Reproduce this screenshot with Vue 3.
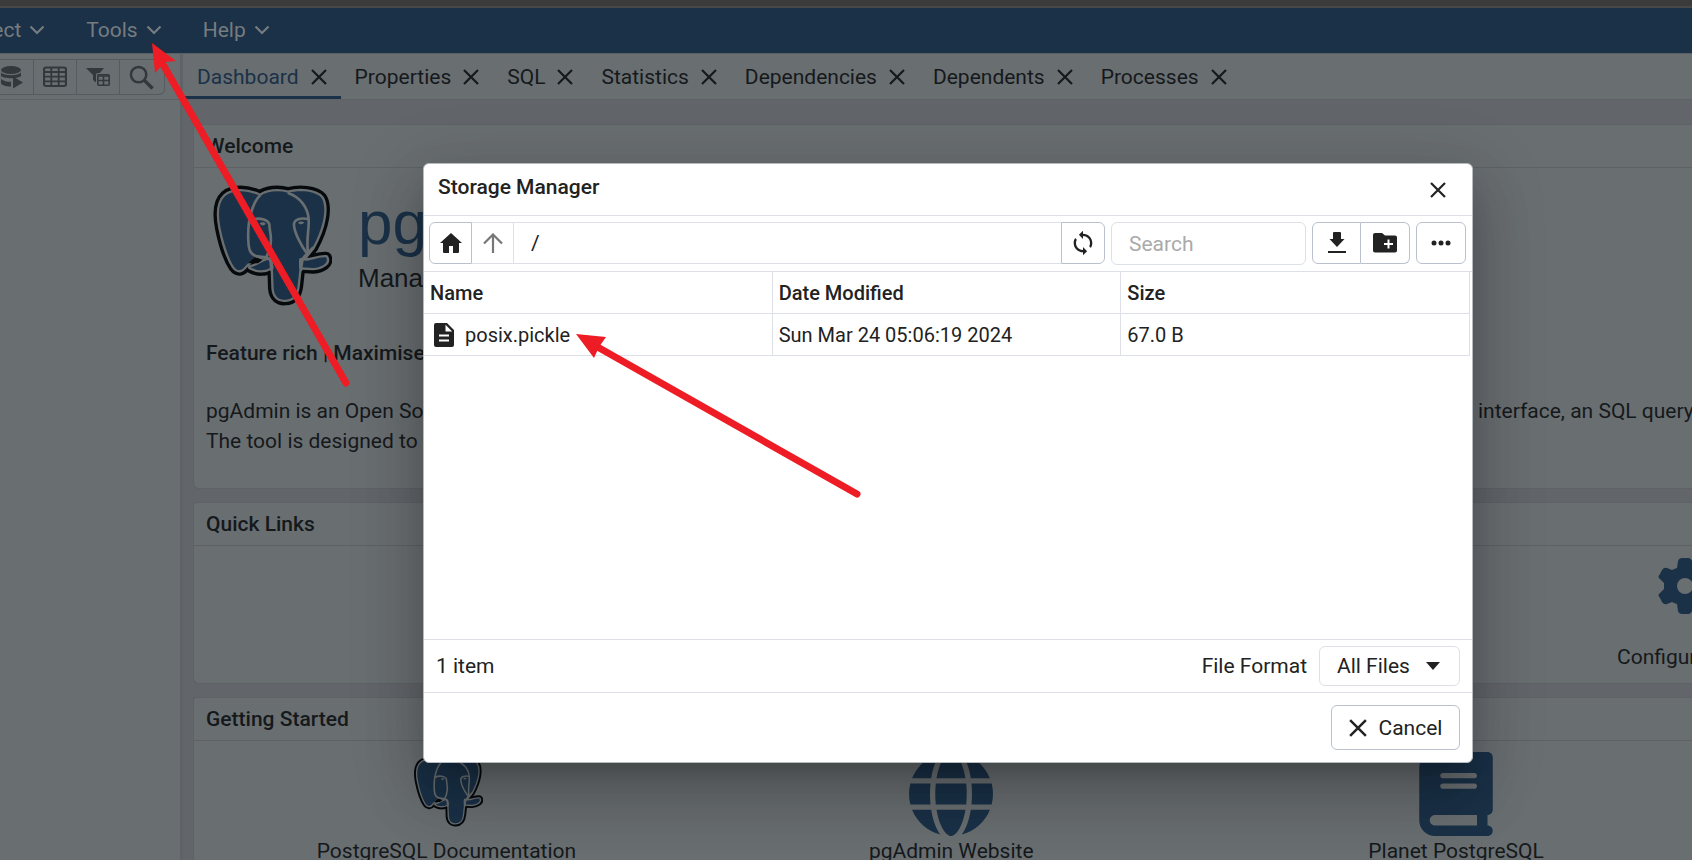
<script setup>
import { ref } from 'vue'

const menus = ['Object', 'Tools', 'Help']
const tabs = ['Dashboard', 'Properties', 'SQL', 'Statistics', 'Dependencies', 'Dependents', 'Processes']
const columns = ['Name', 'Date Modified', 'Size']
const files = [{ name: 'posix.pickle', modified: 'Sun Mar 24 05:06:19 2024', size: '67.0 B' }]
const path = ref('/')
const search = ref('')
const format = ref('All Files')
</script>

<template>
  <div class="app">
    <svg class="defs" aria-hidden="true">
      <symbol id="elephant" viewBox="98 72 360 372">
        <g stroke-linejoin="round" stroke-linecap="round">
          <g class="el-black">
            <path d="M242 108 C200 88 158 90 138 108 C116 128 116 165 124 205 C133 250 147 294 164 320 C176 336 188 332 198 318 L226 290 L280 300 L283 385 C285 411 300 421 318 419 C344 418 352 402 355 375 L362 310 L400 262 C434 200 444 140 426 113 C408 92 360 90 326 98 C296 90 262 93 242 108Z" />
            <path d="M213 322 C240 316 246 302 270 300 L276 322 C258 333 234 334 213 322Z M366 300 C392 308 412 290 440 292 C450 308 428 322 402 324 L366 322Z" />
          </g>
          <g class="el-line">
            <path d="M242 108 C200 88 158 90 138 108 C116 128 116 165 124 205 C133 250 147 294 164 320 C176 336 188 332 198 318 L226 290 L280 300 L283 385 C285 411 300 421 318 419 C344 418 352 402 355 375 L362 310 L400 262 C434 200 444 140 426 113 C408 92 360 90 326 98 C296 90 262 93 242 108Z" />
            <path d="M213 322 C240 316 246 302 270 300 L276 322 C258 333 234 334 213 322Z M366 300 C392 308 412 290 440 292 C450 308 428 322 402 324 L366 322Z" />
          </g>
          <path class="el-ink" d="M206 310 L226 291 L250 299 L236 310Z" />
          <g class="el-detail">
            <path d="M242 106 C224 124 216 150 210 180 C206 205 206 235 208 256 C210 276 220 288 238 290" />
            <path d="M212 182 C230 172 262 174 270 192 C270 216 280 232 272 262 C270 276 264 286 258 296" />
            <path d="M328 100 C362 112 386 142 388 178 C390 205 380 240 386 278" />
            <path d="M388 178 C366 172 342 178 344 196 C346 220 366 258 384 282 L400 264" />
            <path d="M384 282 C366 292 368 310 365 330" />
            <path d="M238 290 C256 290 274 294 274 306 L276 330" />
          </g>
          <path class="el-eye" d="M241 190 C246 185 255 186 259 191 C255 198 246 198 241 190Z M356 188 C362 183 370 184 375 187 C371 194 362 195 356 188Z" />
        </g>
      </symbol>
      <symbol id="chevron" viewBox="0 0 16 10"><path d="M1.500 1.500 L8 8 L14.500 1.500" fill="none" stroke="currentColor" stroke-width="2.200" /></symbol>
      <symbol id="cross" viewBox="0 0 16 16"><path d="M1 1 L15 15 M15 1 L1 15" fill="none" stroke="currentColor" stroke-width="2.200" /></symbol>
    </svg>

    <div class="strip"></div>
    <nav class="menubar">
      <button v-for="m in menus" :key="m" type="button">{{ m }}<svg width="16" height="10"><use href="#chevron" /></svg></button>
    </nav>

    <div class="workspace">
      <aside class="browser">
        <div class="tools">
          <div class="tool-group">
            <button type="button" aria-label="Query tool">
              <svg width="24" height="24" viewBox="0 0 24 24">
                <ellipse cx="11" cy="5" rx="10" ry="4" />
                <path d="M1 7.500 C4 11 18 11 21 7.500 V11 C18 14 4 14 1 11Z M1 14 C4 16.500 8 17 11 16.800 V21.500 C6 21.500 1 20 1 18Z M13 11.500 L23 17.500 L13 23.500Z" />
              </svg>
            </button>
            <button type="button" aria-label="View data">
              <svg width="24" height="22" viewBox="0 0 24 22">
                <g fill="none" stroke="currentColor" stroke-width="1.800">
                  <rect x="1" y="1.500" width="22" height="18.500" rx="2" stroke-width="2.200" />
                  <path d="M1 6 H23 M1 10.700 H23 M1 15.300 H23 M8.300 2 V20 M15.700 2 V20" />
                </g>
              </svg>
            </button>
            <button type="button" aria-label="Filtered rows">
              <svg width="24" height="20" viewBox="0 0 24 20">
                <path d="M0 1 H18 L12 8 V17 L7 13 V8Z" />
                <rect x="10" y="6" width="14" height="14" rx="2" class="knock" />
                <g fill="none" stroke="currentColor" stroke-width="1.600">
                  <rect x="11.800" y="7.800" width="11.400" height="10.400" rx="1" />
                  <path d="M12 9 H23 M12 13.500 H23 M17.500 9 V18" />
                </g>
              </svg>
            </button>
            <button type="button" aria-label="Search objects">
              <svg width="25" height="25" viewBox="0 0 26 26">
                <g fill="none" stroke="currentColor">
                  <circle cx="10" cy="10" r="8" stroke-width="2.600" />
                  <path d="M16 16 L24.500 24.500" stroke-width="3.600" />
                </g>
              </svg>
            </button>
          </div>
        </div>
      </aside>

      <main class="content">
        <div class="tabs" role="tablist">
          <div v-for="(t, i) in tabs" :key="t" class="tab" :class="{ active: i === 0 }">
            <button type="button" role="tab">{{ t }}</button>
            <button type="button" class="tab-x" :aria-label="'Close ' + t"><svg width="16" height="16"><use href="#cross" /></svg></button>
          </div>
        </div>

        <div class="cards">
          <section class="card">
            <h2>Welcome</h2>
            <div class="welcome">
              <div class="brand">
                <svg width="120" height="124"><use href="#elephant" /></svg>
                <div class="brand-text">
                  <div class="brand-name">pgAdmin</div>
                  <div class="brand-sub">Management Tools for PostgreSQL</div>
                </div>
              </div>
              <h3>Feature rich | Maximises PostgreSQL | Open Source</h3>
              <div class="about">
                <span>pgAdmin is an Open Source administration and management tool for the PostgreSQL database.</span>
                <span>interface, an SQL query tool</span>
              </div>
              <div class="about"><span>The tool is designed to answer the needs of developers</span></div>
            </div>
          </section>

          <section class="card">
            <h2>Quick Links</h2>
            <div class="quick">
              <a href="#" class="config">
                <svg width="56" height="56" viewBox="-28 -28 56 56">
                  <path fill-rule="evenodd" d="M-7 -25 Q-6 -28 -3 -28 H3 Q6 -28 7 -25 L8 -18 Q11 -17 13 -15 L19 -18 Q22 -19 24 -16 L26 -12 Q28 -9 25 -7 L21 -4 V4 L25 7 Q28 9 26 12 L24 16 Q22 19 19 18 L13 15 Q11 17 8 18 L7 25 Q6 28 3 28 H-3 Q-6 28 -7 25 L-8 18 Q-11 17 -13 16 L-18 18 Q-21 19 -23 16 L-25 12 Q-28 9 -25 7 L-21 3 V-3 L-25 -7 Q-28 -9 -25 -12 L-23 -16 Q-21 -19 -18 -18 L-13 -16 Q-11 -17 -8 -18Z M0 -8 A8 8 0 1 0 0 8 A8 8 0 1 0 0 -8Z" />
                </svg>
                <span>Configure pgAdmin</span>
              </a>
            </div>
          </section>

          <section class="card">
            <h2>Getting Started</h2>
            <div class="started">
              <a href="#">
                <span class="pic docs"><svg width="70" height="72"><use href="#elephant" /></svg></span>
                <span>PostgreSQL Documentation</span>
              </a>
              <a href="#">
                <span class="pic"><svg width="84" height="84" viewBox="0 0 512 512"><path d="M352 256c0 22.200-1.200 43.600-3.300 64H163.300c-2.200-20.400-3.300-41.800-3.300-64s1.200-43.600 3.300-64H348.700c2.200 20.400 3.300 41.800 3.300 64zm28.800-64H503.900c5.300 20.500 8.100 41.900 8.100 64s-2.800 43.500-8.100 64H380.800c2.100-20.600 3.200-42 3.200-64s-1.100-43.400-3.200-64zm112.600-32H376.700c-10-63.900-29.800-117.400-55.300-151.600c78.300 20.700 142 77.500 171.900 151.600zm-149.100 0H167.700c6.100-36.400 15.500-68.600 27-94.700c10.500-23.600 22.200-40.700 33.500-51.500C239.400 3.200 248.700 0 256 0s16.600 3.200 27.800 13.800c11.300 10.800 23 27.900 33.500 51.500c11.600 26 20.900 58.200 27 94.700zm-209 0H18.600C48.600 85.900 112.200 29.100 190.600 8.400C165.100 42.600 145.300 96.100 135.300 160zM8.100 192H131.200c-2.100 20.600-3.200 42-3.200 64s1.100 43.400 3.200 64H8.100C2.800 299.500 0 278.100 0 256s2.800-43.500 8.100-64zM194.700 446.600c-11.600-26-20.900-58.200-27-94.600H344.300c-6.100 36.400-15.500 68.600-27 94.600c-10.500 23.600-22.200 40.700-33.500 51.500C272.600 508.800 263.300 512 256 512s-16.600-3.200-27.800-13.800c-11.300-10.800-23-27.900-33.500-51.500zM135.300 352c10 63.900 29.800 117.400 55.300 151.600C112.200 482.900 48.600 426.100 18.600 352H135.300zm358.100 0c-30 74.100-93.600 130.900-171.900 151.600c25.500-34.200 45.200-87.700 55.300-151.600H493.400z" /></svg></span>
                <span>pgAdmin Website</span>
              </a>
              <a href="#">
                <span class="pic"><svg width="74" height="84" viewBox="0 0 448 512"><path d="M96 0C43 0 0 43 0 96V416c0 53 43 96 96 96H384h32c17.700 0 32-14.300 32-32s-14.300-32-32-32V384c17.700 0 32-14.300 32-32V32c0-17.700-14.300-32-32-32H384 96zm0 384H352v64H96c-17.700 0-32-14.300-32-32s14.300-32 32-32zm32-240c0-8.800 7.200-16 16-16H336c8.800 0 16 7.200 16 16s-7.200 16-16 16H144c-8.800 0-16-7.200-16-16zm16 48H336c8.800 0 16 7.200 16 16s-7.200 16-16 16H144c-8.800 0-16-7.200-16-16s7.200-16 16-16z" /></svg></span>
                <span>Planet PostgreSQL</span>
              </a>
            </div>
          </section>
        </div>
      </main>
    </div>

    <div class="overlay">
      <div class="dialog" role="dialog" aria-labelledby="dialog-title">
        <header>
          <h1 id="dialog-title">Storage Manager</h1>
          <button type="button" aria-label="Close"><svg width="16" height="16"><use href="#cross" /></svg></button>
        </header>

        <div class="bar">
          <div class="path">
            <button type="button" class="home" aria-label="Home"><svg width="22" height="20" viewBox="0 0 22 20"><path d="M11 0 L22 10 H19 V19 Q19 20 18 20 H13 V13 H9 V20 H4 Q3 20 3 19 V10 H0Z" /></svg></button>
            <button type="button" class="up" aria-label="Up"><svg width="20" height="20" viewBox="0 0 20 20"><path d="M10 20 V2 M1 10.500 L10 1.500 L19 10.500" fill="none" stroke="currentColor" stroke-width="2.200" /></svg></button>
            <input v-model="path" type="text" aria-label="Path" />
            <button type="button" class="refresh" aria-label="Refresh"><svg width="28" height="28" viewBox="0 0 24 24"><path d="M12 4V1.500L8.500 5l3.500 3.500V6c3.310 0 6 2.690 6 6 0 1.010-.25 1.970-.7 2.800l1.460 1.460C19.540 15.030 20 13.570 20 12c0-4.420-3.580-8-8-8zm0 14c-3.310 0-6-2.690-6-6 0-1.010.25-1.970.7-2.800L5.240 7.740C4.460 8.970 4 10.430 4 12c0 4.420 3.580 8 8 8v2.500l3.500-3.500-3.500-3.500v2.500z" /></svg></button>
          </div>
          <input v-model="search" class="search" type="text" placeholder="Search" aria-label="Search" />
          <div class="pair">
            <button type="button" aria-label="Download"><svg width="18" height="22" viewBox="0 0 18 22"><path d="M5 1 Q5 0 6 0 H12 Q13 0 13 1 V7 H16.500 L9 15 L1.500 7 H5Z M0 19 H18 V21 H0Z" /></svg></button>
            <button type="button" aria-label="New folder"><svg width="24" height="20" viewBox="0 0 24 20"><path fill-rule="evenodd" d="M2 0 H9 L12 2.500 H22 Q24 2.500 24 4.500 V17.500 Q24 19.500 22 19.500 H2 Q0 19.500 0 17.500 V2 Q0 0 2 0Z M14.500 6.500 V10 H11 V12 H14.500 V15.500 H16.500 V12 H20 V10 H16.500 V6.500Z" /></svg></button>
          </div>
          <button type="button" class="more" aria-label="More options"><svg width="20" height="6" viewBox="0 0 20 6"><circle cx="3" cy="3" r="2.500" /><circle cx="10" cy="3" r="2.500" /><circle cx="17" cy="3" r="2.500" /></svg></button>
        </div>

        <div class="listing">
          <table>
            <thead>
              <tr><th v-for="c in columns" :key="c">{{ c }}</th></tr>
            </thead>
            <tbody>
              <tr v-for="f in files" :key="f.name">
                <td>
                  <span class="file"><svg width="20" height="24" viewBox="0 0 20 24"><path fill-rule="evenodd" d="M2 0 H13 L20 7 V22 Q20 24 18 24 H2 Q0 24 0 22 V2 Q0 0 2 0Z M11.500 1.800 V8.500 H18.200Z M5 11.500 H15 V13.500 H5Z M5 16.500 H15 V18.500 H5Z" /></svg>{{ f.name }}</span>
                </td>
                <td>{{ f.modified }}</td>
                <td>{{ f.size }}</td>
              </tr>
            </tbody>
          </table>
        </div>

        <div class="status">
          <span>1 item</span>
          <label for="format">File Format</label>
          <span class="select">
            <select id="format" v-model="format"><option>All Files</option></select>
            <svg width="14" height="8" viewBox="0 0 14 8"><path d="M0 0 H14 L7 8Z" /></svg>
          </span>
        </div>

        <footer>
          <button type="button"><svg width="18" height="18"><use href="#cross" /></svg>Cancel</button>
        </footer>
      </div>
    </div>

    <svg class="arrows" aria-hidden="true">
      <path d="M161 61 L346 383" />
      <path d="M594 345 L857 494" />
      <polygon points="152,43 176,61 165,62 155,73" />
      <polygon points="576,334 606,337 599,347 594,358" />
    </svg>
  </div>
</template>

<style>
body { margin: 0; overflow: hidden; background: #696e71; }
</style>

<style scoped>
* { box-sizing: border-box; }
.app {
  position: relative;
  display: flex;
  flex-direction: column;
  height: 100vh;
  overflow: hidden;
  font: 21px/30px Roboto, "Liberation Sans", sans-serif;
  color: #15191c;
}
.defs { position: absolute; width: 0; height: 0; }
svg { display: block; flex: none; fill: currentColor; }
button, input, select { font: inherit; color: inherit; background: none; border: 0; padding: 0; margin: 0; border-radius: 0; }
a { color: inherit; text-decoration: none; }
h1, h2, h3 { margin: 0; font-size: 21px; font-weight: 500; }

.el-black path { fill: #060a0d; stroke: #060a0d; stroke-width: 34; }
.el-line path { fill: #1a3147; stroke: #696e71; stroke-width: 14; paint-order: stroke; }
.el-detail path { fill: none; stroke: #696e71; stroke-width: 8; }
.el-ink { fill: #060a0d; }
.el-eye { fill: #696e71; }

.strip { flex: none; height: 8px; background: #3b3b3b; border-bottom: 2px solid #484946; }
.menubar { flex: none; display: flex; height: 45px; gap: 41px; background: #1a3147; color: #777c80; }
.menubar button { display: flex; align-items: center; gap: 8px; padding-bottom: 1px; }
.menubar button:first-child { margin-left: -39px; }

.workspace { flex: 1; display: flex; min-height: 0; border-top: 1px solid #5b6065; }
.browser { flex: none; width: 183px; border-right: 3px solid #5f6367; background: #696e71; }
.tools { height: 46px; padding-top: 5px; border-bottom: 1px solid #5f6367; }
.tool-group { display: flex; width: 165px; height: 36px; border: 1px solid #565b5f; border-left: 0; border-radius: 0 6px 6px 0; color: #32383c; }
.tool-group button { flex: 1; display: flex; align-items: center; justify-content: center; border-right: 1px solid #565b5f; }
.tool-group button:first-child { flex: none; width: 34px; justify-content: flex-start; }
.tool-group button:last-child { border-right: 0; padding-right: 2px; }
.knock { fill: #696e71; }

.content { flex: 1; min-width: 0; display: flex; flex-direction: column; background: #626569; }
.tabs { flex: none; display: flex; height: 46px; background: #696e71; border-bottom: 1px solid #5f6367; }
.tab { display: flex; align-items: center; gap: 12px; padding: 3px 14px; white-space: nowrap; height: 45px; }
.tab.active { border-bottom: 3px solid #1a3147; padding-bottom: 0; }
.tab.active button:first-child { color: #1a3147; }

.cards { display: flex; flex-direction: column; gap: 13px; padding: 24px 0 0 10px; overflow: hidden; flex: 1; }
.card { flex: none; overflow: hidden; background: #696e71; border: 1px solid #5e6265; border-right: 0; border-radius: 3px 0 0 6px; }
h2 { height: 43px; padding: 6px 12px; border-bottom: 1px solid #5e6265; }
.welcome { height: 320px; padding: 16px 0 0 12px; white-space: nowrap; }
.brand { display: flex; gap: 26px; height: 154px; padding-left: 6px; }
.brand-text { padding-top: 4px; }
.brand-name { font: 62px/70px "Liberation Sans", Arial, sans-serif; color: #1a3147; }
.brand-sub { font: 26px/40px "Liberation Sans", Arial, sans-serif; }
h3 { margin-bottom: 28px; }
.about { display: flex; }
.about span:first-child { flex: none; width: 85.6%; overflow: hidden; }
.quick { height: 137px; padding-top: 12px; }
.config { display: flex; flex-direction: column; margin-left: 95%; white-space: nowrap; color: #15191c; gap: 28px; }
.config svg { margin-left: 40px; color: #1a3147; }
.started { display: grid; grid-template-columns: repeat(4, 33.7%); height: 200px; padding-top: 11px; }
.started a { display: flex; flex-direction: column; align-items: center; white-space: nowrap; }
.pic { display: flex; align-items: center; height: 84px; color: #1a3147; }
.docs { align-items: flex-start; padding: 4px 0 0 4px; }

.overlay { position: absolute; inset: 0; display: flex; align-items: flex-start; padding: 163px 219px 0 25%; }
.dialog {
  flex: 1;
  min-width: 0;
  display: flex;
  flex-direction: column;
  height: 600px;
  color: #222;
  background: #fff;
  border: 1px solid #b6bbc2;
  border-radius: 6px;
  box-shadow: 0 17px 23px -11px rgba(0, 0, 0, .2), 0 36px 57px 5px rgba(0, 0, 0, .14), 0 14px 69px 12px rgba(0, 0, 0, .12);
}
header { display: flex; justify-content: space-between; height: 52px; padding: 8px 26px 0 14px; border-bottom: 1px solid #dde0e6; }
header button { height: 34px; }
header svg { margin-top: 2px; }
.bar { display: flex; gap: 6px; height: 56px; padding: 6px 6px 0 5px; border-bottom: 1px solid #dde0e6; }
.bar button { display: flex; align-items: center; justify-content: center; height: 42px; border: 1px solid #bac1cd; }
.path { flex: 1; display: flex; min-width: 0; }
.path .home { width: 43px; border-radius: 6px 0 0 6px; }
.path .up { width: 42px; border-color: #dde0e6; border-left: 0; color: #777; }
.path input { flex: 1; min-width: 0; height: 42px; padding: 0 17px; border: 1px solid #dde0e6; border-width: 1px 0; }
.path .refresh { width: 44px; border-radius: 0 6px 6px 0; }
.search { width: 195px; height: 43px; padding: 0 17px; border: 1px solid #dde0e6; border-radius: 6px; }
.search::placeholder { color: #aaa; opacity: 1; }
.pair { display: flex; }
.pair button { width: 49px; border-radius: 6px 0 0 6px; }
.pair button + button { border-left: 0; border-radius: 0 6px 6px 0; }
.bar .more { width: 50px; border-radius: 6px; }

.listing { flex: 1; padding-right: 2px; }
table { width: 100%; table-layout: fixed; border-collapse: separate; border-spacing: 0; font-size: 20px; }
th, td { height: 42px; padding: 0 6px; text-align: left; border: 0 solid #dde0e6; border-width: 0 1px 1px 0; }
th { font-weight: 500; }
.file { display: flex; align-items: center; gap: 11px; padding-left: 4px; }

.status { display: flex; align-items: center; gap: 12px; height: 53px; padding: 0 12px; border-top: 1px solid #dde0e6; }
.status > span:first-child { flex: 1; }
.select { position: relative; }
select { display: block; width: 141px; height: 40px; padding: 0 17px; appearance: none; border: 1px solid #dde0e6; border-radius: 6px; }
.select svg { position: absolute; right: 20px; top: 16px; pointer-events: none; }
footer { display: flex; justify-content: flex-end; height: 70px; padding: 12px 12px 0; border-top: 1px solid #dde0e6; }
footer button { display: flex; align-items: center; justify-content: center; gap: 12px; width: 129px; height: 45px; border: 1px solid #bac1cd; border-radius: 6px; }

.arrows { position: absolute; inset: 0; width: 100%; height: 100%; pointer-events: none; }
.arrows path { fill: none; stroke: #ee1c24; stroke-width: 7; stroke-linecap: round; }
.arrows polygon { fill: #ee1c24; }
</style>
